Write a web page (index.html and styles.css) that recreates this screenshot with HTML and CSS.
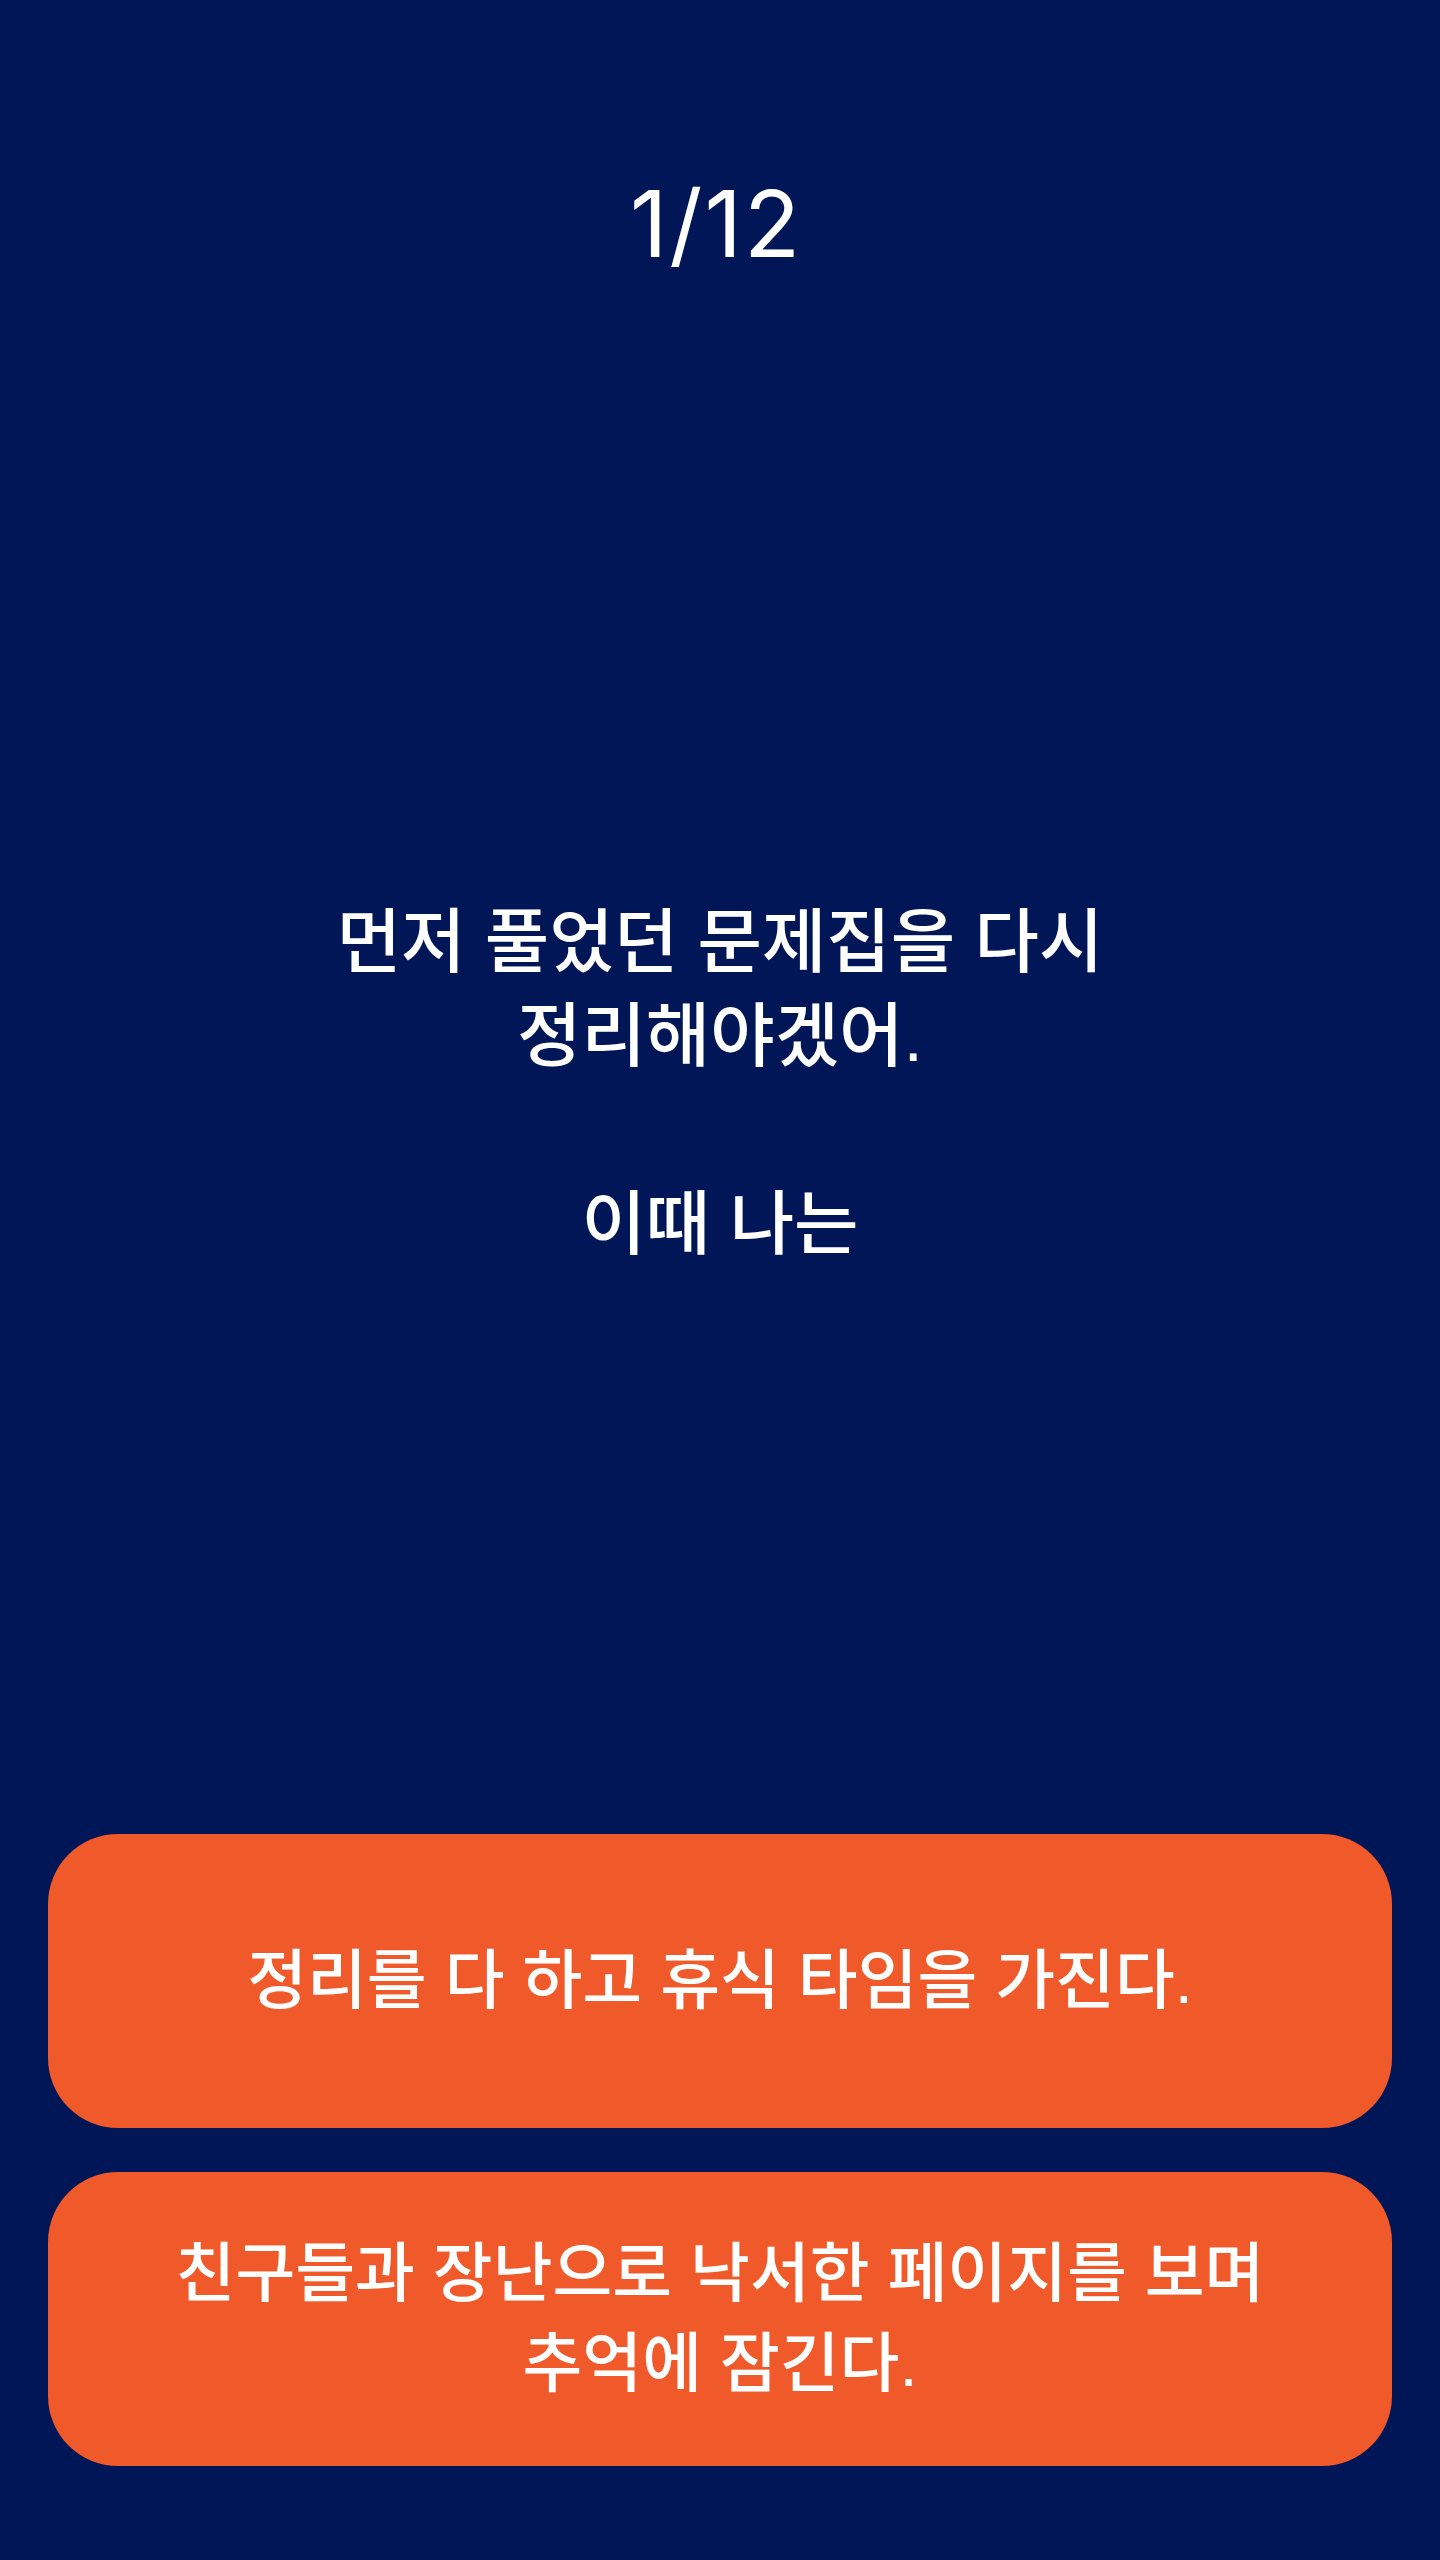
FILE: index.html
```html
<!DOCTYPE html>
<html lang="ko">
<head>
<meta charset="utf-8">
<title>Quiz 1/12</title>
<link rel="stylesheet" href="styles.css">
</head>
<body>
<main class="screen">
  <header class="counter">1/12</header>
  <section class="question">
    <p class="question-text">먼저 풀었던 문제집을 다시<br>정리해야겠어.</p>
    <p class="question-text question-lead">이때 나는</p>
  </section>
  <div class="answers">
    <button class="answer" type="button">정리를 다 하고 휴식 타임을 가진다.</button>
    <button class="answer" type="button">친구들과 장난으로 낙서한 페이지를 보며 추억에 잠긴다.</button>
  </div>
</main>
</body>
</html>
```

FILE: styles.css
```css
* {
  box-sizing: border-box;
}

html, body {
  margin: 0;
  padding: 0;
  background: #011657;
}

.screen {
  width: 1440px;
  min-height: 2560px;
  display: flex;
  flex-direction: column;
  background: #011657;
  color: #ffffff;
  font-family: "Liberation Sans", "Noto Sans CJK KR", sans-serif;
  word-break: keep-all;
}

.counter {
  padding-top: 178px;
  padding-right: 8px;
  font-family: "Inter", "Liberation Sans", sans-serif;
  font-size: 92px;
  line-height: 1;
  font-weight: 400;
  text-align: center;
  letter-spacing: 2px;
}

.question {
  margin-top: 626px;
  padding: 0 160px;
  text-align: center;
}

.question-text {
  margin: 0;
  font-size: 70px;
  font-weight: 500;
  line-height: 94px;
}

.question-lead {
  margin-top: 94px;
}

.answers {
  margin-top: auto;
  padding: 0 48px 94px;
  display: flex;
  flex-direction: column;
  gap: 44px;
}

.answer {
  height: 294px;
  width: 100%;
  border: none;
  border-radius: 70px;
  background: #f0592a;
  color: #ffffff;
  font-family: "Liberation Sans", "Noto Sans CJK KR", sans-serif;
  font-size: 65px;
  font-weight: 500;
  line-height: 90px;
  padding: 0 90px;
  display: flex;
  align-items: center;
  justify-content: center;
  text-align: center;
  word-break: keep-all;
}
```
